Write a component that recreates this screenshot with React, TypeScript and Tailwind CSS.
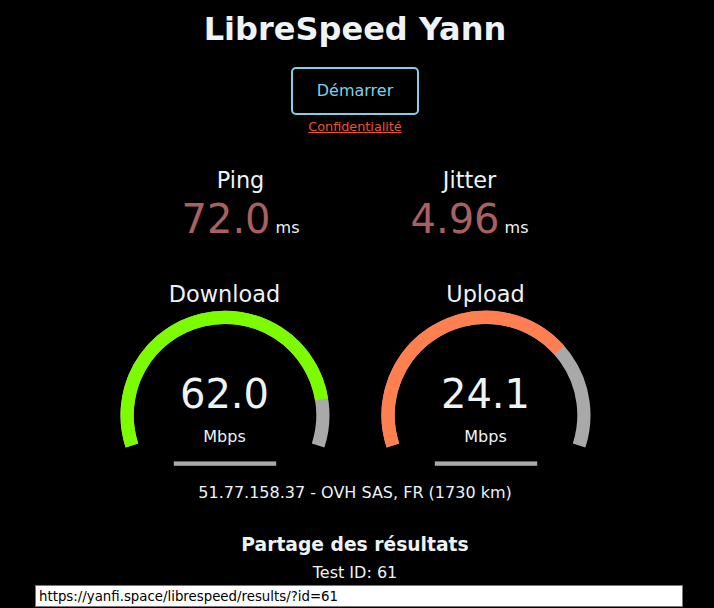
const textColor = 'text-[#eef3f6]'

// arc geometry from the original canvas meter: 256x200 box, r=97.9, stroke 13.2
const CX = 128
const CY = 136.2
const R = 97.9
const START = 0.9 * Math.PI

function mbpsToAmount(s: number) {
  return 1 - 1 / Math.pow(1.3, Math.sqrt(s))
}

function arcPath(amount: number) {
  const end = amount * Math.PI * 1.2 - Math.PI * 1.1
  const sweep = end - -Math.PI * 1.1
  const x0 = CX + R * Math.cos(START)
  const y0 = CY + R * Math.sin(START)
  const x1 = CX + R * Math.cos(end)
  const y1 = CY + R * Math.sin(end)
  const large = sweep > Math.PI ? 1 : 0
  return `M ${x0} ${y0} A ${R} ${R} 0 ${large} 1 ${x1} ${y1}`
}

function Gauge({ name, value, color }: { name: string; value: string; color: string }) {
  const amount = mbpsToAmount(parseFloat(value))
  return (
    <div className="relative w-[256px] h-[200px]">
      <svg className="absolute inset-0" width="256" height="200" viewBox="0 0 256 200">
        <path d={arcPath(1)} fill="none" stroke="#a9a9a9" strokeWidth="13.2" />
        <path d={arcPath(amount)} fill="none" stroke={color} strokeWidth="13.2" />
        <rect x="76.8" y="182.4" width="102.4" height="4.4" fill="#a9a9a9" />
      </svg>
      <div className="absolute top-[1.6px] left-0 w-full text-[22.4px] leading-[26px]">{name}</div>
      <div className="absolute bottom-[62px] left-0 w-full text-[40px] leading-[46.5px]">{value}</div>
      <div className="absolute bottom-[32px] left-0 w-full text-[16px] leading-[18.6px]">Mbps</div>
    </div>
  )
}

function Latency({ name, value }: { name: string; value: string }) {
  return (
    <div className="w-[224px] h-[112px]">
      <div className="text-[22.4px] leading-[26px]">{name}</div>
      <div className="mt-[3px] flex items-baseline justify-center gap-[5px]">
        <span className="text-[40px] leading-[46px] text-[#aa6060]">{value}</span>
        <span className="text-[16px] leading-[19px]">ms</span>
      </div>
    </div>
  )
}

export default function App() {
  return (
    <div className="w-full h-[608px] overflow-hidden bg-black">
      <div className={`w-[710px] text-center font-['DejaVu_Sans',sans-serif] ${textColor}`}>
        <h1 className="pt-[10px] text-[32px] leading-[38px] font-bold">LibreSpeed Yann</h1>

        <div className="mt-[19px] flex justify-center">
          <button className="w-[128px] h-[48px] flex items-center justify-center border-2 border-[#80d0e8] rounded-[5px] text-[16px] text-[#80d0e8]">
            Démarrer
          </button>
        </div>
        <div className="mt-[3.5px] text-[12.8px] leading-[15px]">
          <a href="#" className="text-[#f0502a] underline">Confidentialité</a>
        </div>

        <div className="mt-[33px] flex justify-center gap-[5px]">
          <Latency name="Ping" value="72.0" />
          <Latency name="Jitter" value="4.96" />
        </div>

        <div className="mt-[0.5px] flex justify-center gap-[5px]">
          <Gauge name="Download" value="62.0" color="#7cfc00" />
          <Gauge name="Upload" value="24.1" color="#ff7f50" />
        </div>

        <div className="mt-[4px] text-[16px] leading-[19px]">51.77.158.37 - OVH SAS, FR (1730 km)</div>

        <h3 className="mt-[32px] text-[18.72px] leading-[22px] font-bold">Partage des résultats</h3>
        <div className="mt-[7px] text-[16px] leading-[19px]">Test ID: 61</div>
        <input
          readOnly
          value="https://yanfi.space/librespeed/results/?id=61"
          className="block mt-[3px] ml-[35px] w-[648px] h-[22px] px-[3px] border border-[#767676] bg-white text-black text-[13.33px] text-left"
        />
      </div>
    </div>
  )
}
